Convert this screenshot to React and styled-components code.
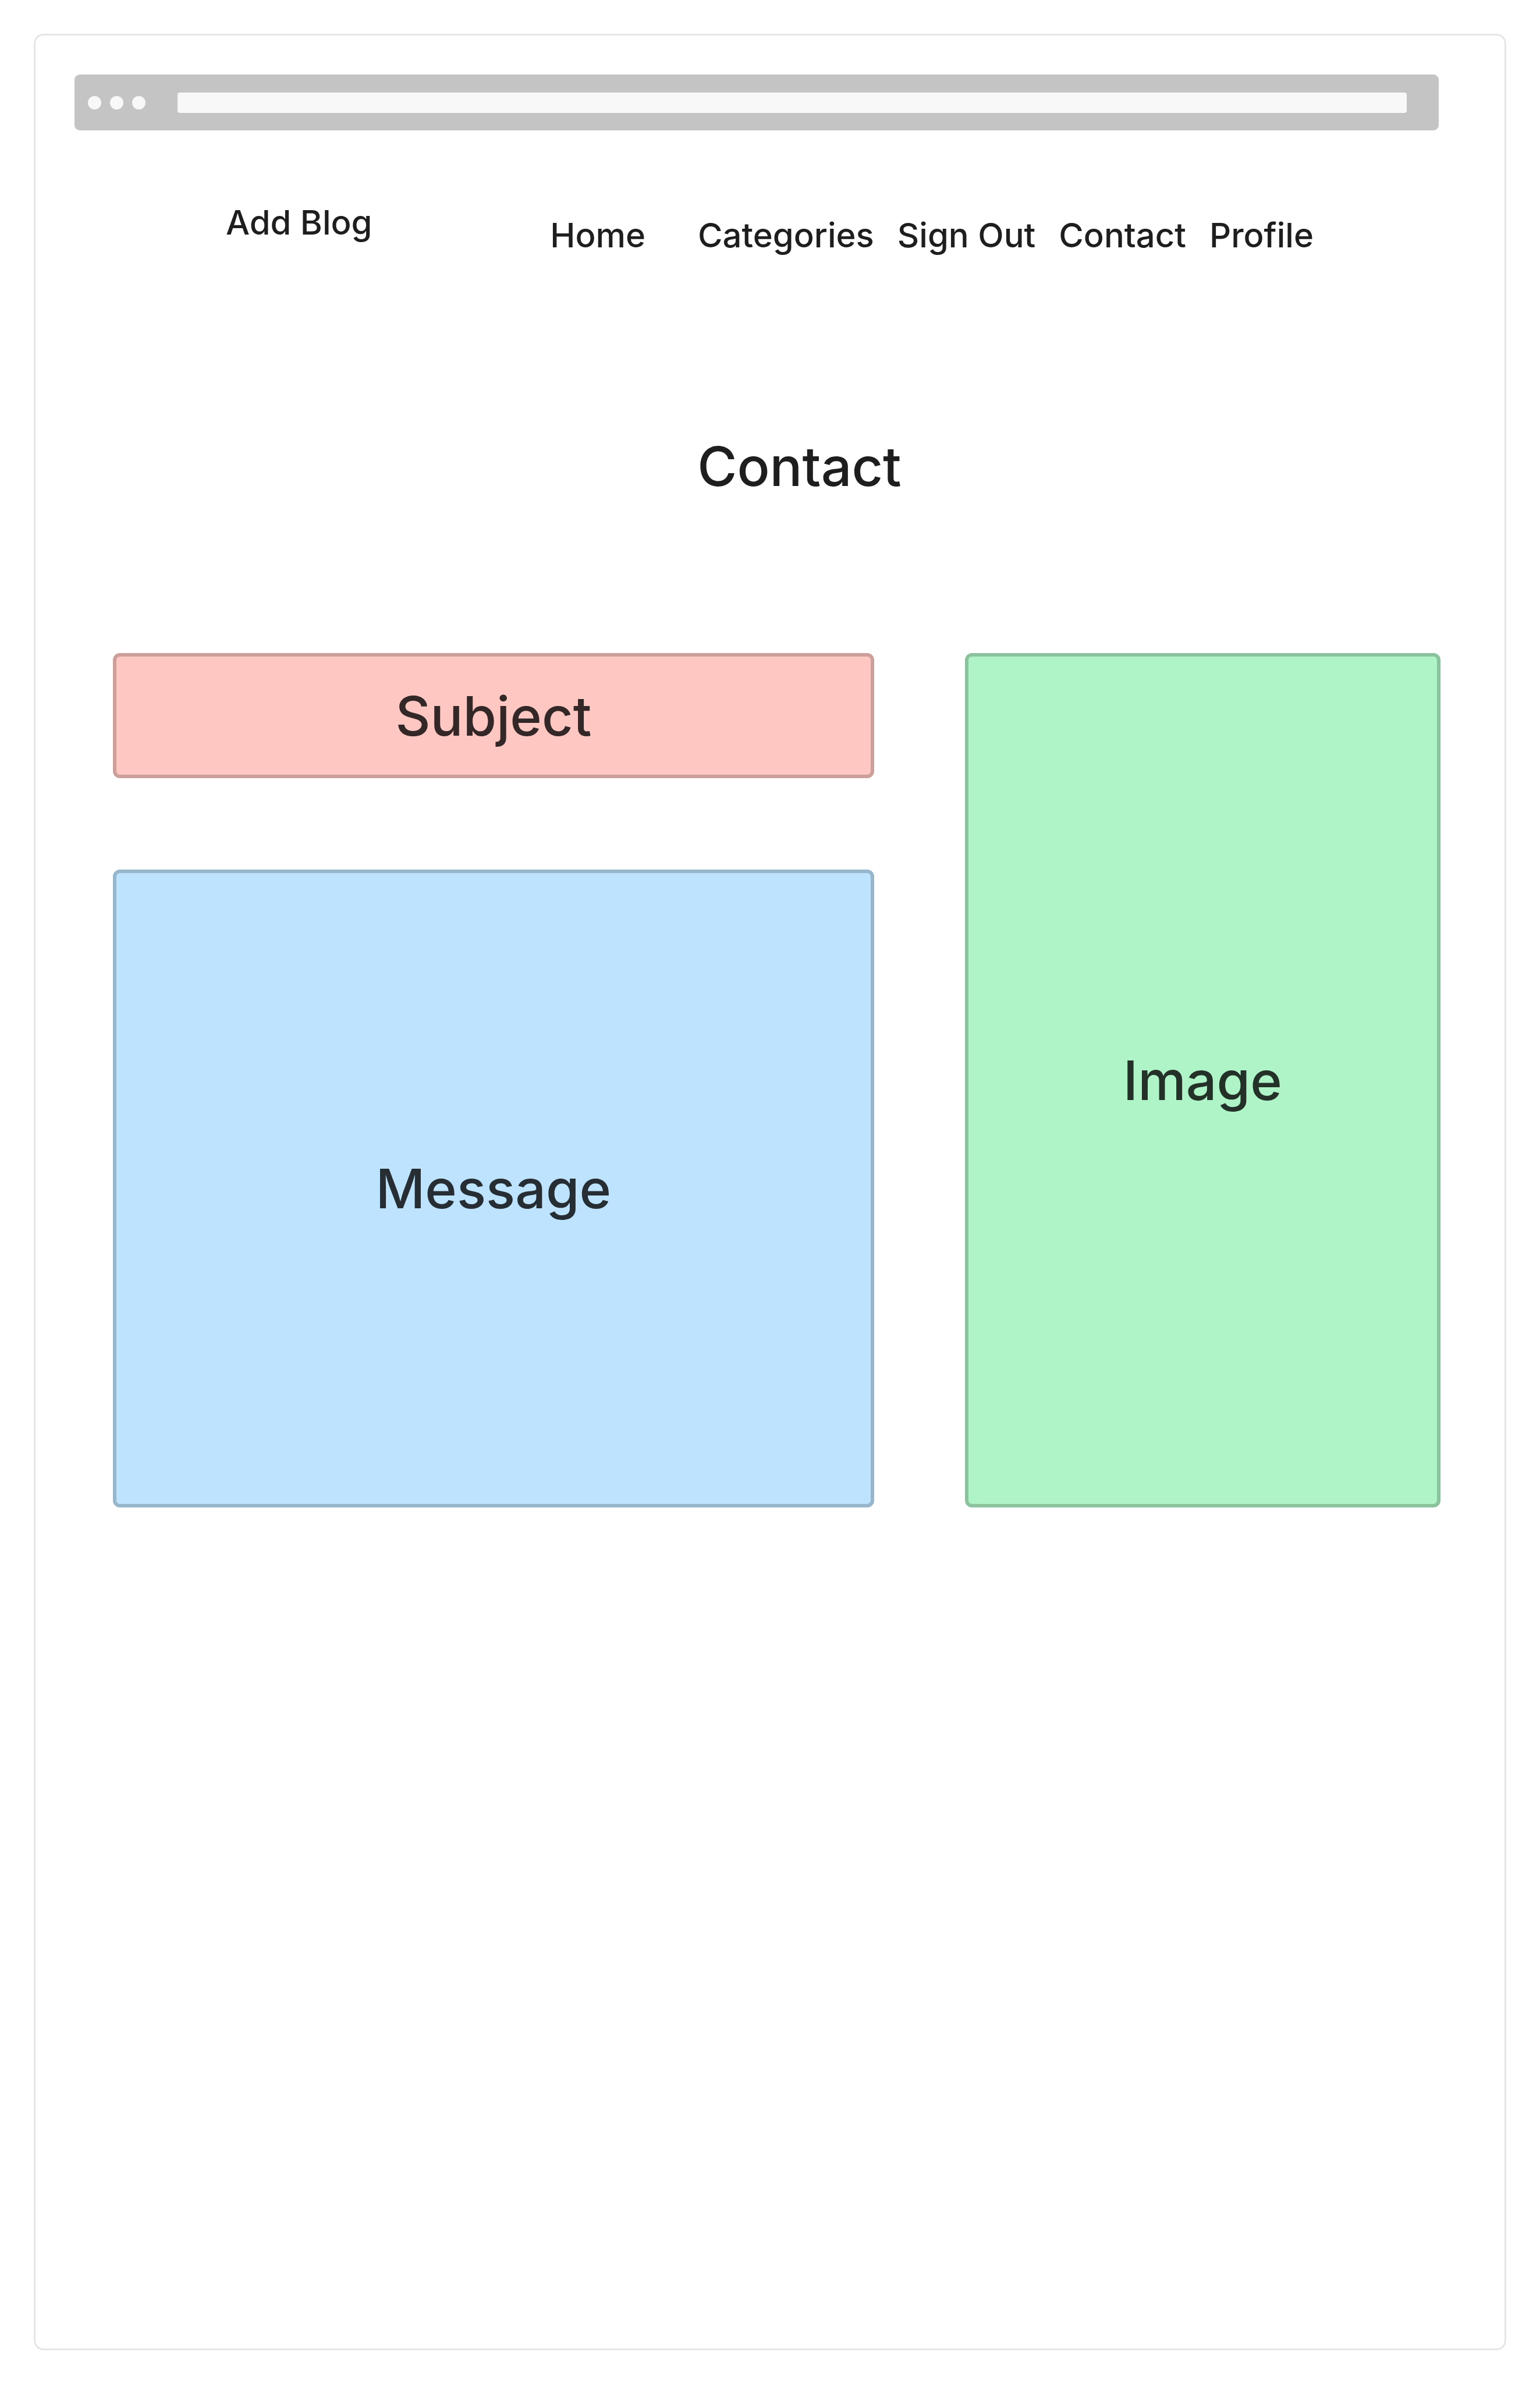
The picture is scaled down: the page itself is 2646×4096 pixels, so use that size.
import React from "react";
import styled, { createGlobalStyle } from "styled-components";

const GlobalStyle = createGlobalStyle`
  *, *::before, *::after { box-sizing: border-box; }
  body {
    margin: 0;
    background: #fff;
    color: #1e1e1e;
    font-family: Inter, "Liberation Sans", sans-serif;
    font-weight: 500;
  }
`;

const Page = styled.div`
  display: flex;
  min-height: 100vh;
  padding: 58px;
`;

const Frame = styled.div`
  flex: 1;
  min-width: 0;
  padding: 67px 110px 67px 67px;
  border: 3px solid #e6e6e6;
  border-radius: 17px;
`;

const BrowserBar = styled.div`
  display: flex;
  align-items: center;
  gap: 15px;
  height: 96px;
  margin-right: 3px;
  padding: 0 55px 0 23px;
  border-radius: 9px;
  background: #c4c4c4;
`;

const Dot = styled.span`
  width: 23px;
  height: 23px;
  border-radius: 50%;
  background: #f8f8f8;
`;

const AddressBar = styled.div`
  flex: 1;
  height: 35px;
  margin-left: 40px;
  border-radius: 4px;
  background: #f8f8f8;
`;

const Header = styled.header`
  display: flex;
  justify-content: space-between;
  align-items: flex-start;
  padding: 123px 218px 0 260px;
`;

const Nav = styled.nav`
  display: flex;
  gap: 40px;
  padding-top: 22px;
`;

const NavLink = styled.a`
  margin-right: ${({ $wide }) => ($wide ? "50px" : "0")};
  color: inherit;
  font-size: 58px;
  line-height: 70px;
  text-decoration: none;
  white-space: nowrap;
`;

const Title = styled.h1`
  margin: 306px 0 265px;
  padding-left: 144px;
  font-size: 93px;
  font-weight: 500;
  line-height: 112px;
  text-align: center;
`;

const Form = styled.form`
  display: grid;
  grid-template-columns: 8fr 5fr;
  gap: 156px;
  padding-left: 66px;
`;

const Fields = styled.div`
  display: grid;
  grid-template-rows: 215px 1096px;
  gap: 157px;
`;

const tones = {
  red: { fill: "#ffc7c2", line: "#cc9f9b", text: "#332827" },
  blue: { fill: "#bde3ff", line: "#97b6cc", text: "#262d33" },
  green: { fill: "#aff4c6", line: "#8cc39e", text: "#233128" },
};

const Box = styled.div`
  display: grid;
  place-items: center;
  border: 6px solid ${({ $tone }) => tones[$tone].line};
  border-radius: 12px;
  background: ${({ $tone }) => tones[$tone].fill};
  color: ${({ $tone }) => tones[$tone].text};

  > * { grid-area: 1 / 1; }
`;

const BoxLabel = styled.label`
  font-size: 93px;
  line-height: 112px;
`;

const Input = styled.input`
  width: 100%;
  height: 100%;
  padding: 0 48px;
  border: 0;
  outline: 0;
  resize: none;
  background: transparent;
  color: inherit;
  font: inherit;
  font-size: 58px;
`;

const links = ["Home", "Categories", "Sign Out", "Contact", "Profile"];

export default function App() {
  return (
    <>
      <GlobalStyle />
      <Page>
        <Frame>
          <BrowserBar>
            <Dot />
            <Dot />
            <Dot />
            <AddressBar />
          </BrowserBar>
          <Header>
            <NavLink href="#add-blog">Add Blog</NavLink>
            <Nav>
              {links.map((name, i) => (
                <NavLink key={name} href={"#" + name.toLowerCase().replace(" ", "-")} $wide={i === 0}>
                  {name}
                </NavLink>
              ))}
            </Nav>
          </Header>
          <main>
            <Title>Contact</Title>
            <Form>
              <Fields>
                <Box $tone="red">
                  <BoxLabel htmlFor="subject">Subject</BoxLabel>
                  <Input id="subject" type="text" />
                </Box>
                <Box $tone="blue">
                  <BoxLabel htmlFor="message">Message</BoxLabel>
                  <Input as="textarea" id="message" />
                </Box>
              </Fields>
              <Box $tone="green">
                <BoxLabel as="span">Image</BoxLabel>
              </Box>
            </Form>
          </main>
        </Frame>
      </Page>
    </>
  );
}
